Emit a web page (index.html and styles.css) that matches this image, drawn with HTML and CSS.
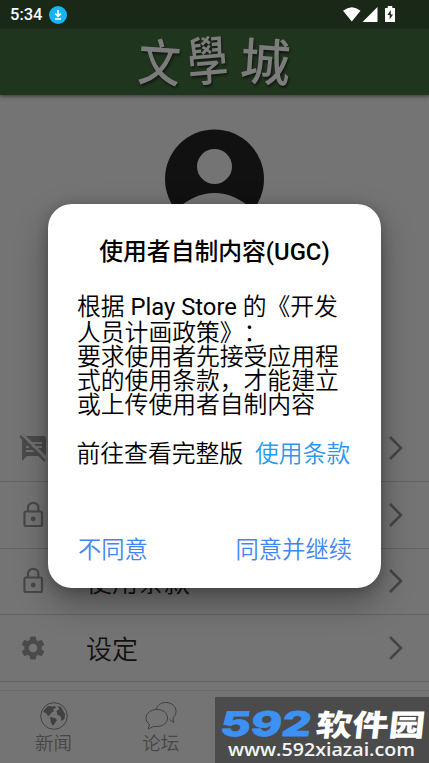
FILE: index.html
```html
<!DOCTYPE html>
<html lang="zh-CN">
<head>
<meta charset="utf-8">
<title>文學城</title>
<link rel="stylesheet" href="styles.css">
</head>
<body>
<div class="screen">
  <header class="status">
    <span class="clock">5:34</span>
    <svg class="download" viewBox="0 0 18 18"><circle cx="9" cy="9" r="9" fill="#16b4f8"/><path d="M9 4v6M6.2 7.6L9 10.4l2.8-2.8M6 13h6" fill="none" stroke="#fff" stroke-width="1.7"/></svg>
    <svg class="signals" viewBox="0 0 54 18"><path d="M0 4.7Q9-2.3 17.5 4.7L8.8 15.5zM19.5 16L34.5 1v15z" fill="#fff"/><path d="M42 2h2.7V0h4.6v2H52v14H42z" fill="#fff"/><path d="M47.8 4l-3.4 5h2.3v4.6l3.3-5.2h-2.2z" fill="#192817"/></svg>
  </header>
  <div class="brand">
    <svg class="wordmark" viewBox="0 0 160 64"><g class="ink"><text transform="translate(2 51) rotate(4) scale(.96 1.15)" font-size="44">文</text><text transform="translate(54 53) rotate(-5) scale(.92 1.2)" font-size="44">學</text><text transform="translate(104 50) rotate(4) scale(1.14 1.15)" font-size="44">城</text></g></svg>
  </div>
  <main class="profile">
    <svg class="avatar" viewBox="0 0 100 100"><defs><mask id="person"><rect width="100" height="100" fill="#fff"/><circle cx="49.5" cy="37.5" r="17.5" fill="#000"/><path d="M12 80Q30 64 49.500 64T87 80Q70 92 49.500 92T12 80" fill="#000"/></mask></defs><circle cx="49.500" cy="50" r="49.500" fill="#111" mask="url(#person)"/></svg>
  </main>
  <ul class="menu">
    <li><svg class="icon" viewBox="0 0 26 26"><path d="M4 1h20q2 0 2 2v16q0 2-2 2H7l-5 5V3z" fill="#4a4a4a"/><path d="M6 8h3m2 0h11M6 12h3m2 0h11M6 16h10" stroke="#707070" stroke-width="2"/><path d="M2-1L28 25" stroke="#707070" stroke-width="3"/><path d="M0 1L25 26" stroke="#4a4a4a" stroke-width="2.300"/></svg><span></span><svg class="chevron" viewBox="0 0 14 24"><path d="M1 1l11 11L1 23"/></svg></li>
    <li><svg class="icon" viewBox="0 0 26 26"><g fill="none" stroke="#484848" stroke-width="2.200"><rect x="4.500" y="9.500" width="17.500" height="14.500" rx="1.500"/><path d="M8 9V6a5.200 5.200 0 0110.400 0v3"/></g><circle cx="13.200" cy="17" r="2.400" fill="#484848"/></svg><span></span><svg class="chevron" viewBox="0 0 14 24"><path d="M1 1l11 11L1 23"/></svg></li>
    <li><svg class="icon" viewBox="0 0 26 26"><g fill="none" stroke="#484848" stroke-width="2.200"><rect x="4.500" y="9.500" width="17.500" height="14.500" rx="1.500"/><path d="M8 9V6a5.200 5.200 0 0110.400 0v3"/></g><circle cx="13.200" cy="17" r="2.400" fill="#484848"/></svg><span>使用条款</span><svg class="chevron" viewBox="0 0 14 24"><path d="M1 1l11 11L1 23"/></svg></li>
    <li><svg class="icon gear" viewBox="2 2 20 20"><path fill="#4a4a4a" d="M19.140 12.940c.04-.3.06-.61.06-.94 0-.32-.02-.64-.07-.94l2.030-1.580c.18-.14.23-.41.12-.61l-1.920-3.320c-.12-.22-.37-.29-.59-.22l-2.390.96c-.5-.38-1.030-.7-1.620-.94l-.36-2.540c-.04-.24-.24-.41-.48-.41h-3.840c-.24 0-.43.17-.47.41l-.36 2.540c-.59.24-1.130.57-1.620.94l-2.390-.96c-.22-.08-.47 0-.59.22L2.740 8.870c-.12.21-.08.47.12.61l2.030 1.580c-.05.3-.09.63-.09.94s.02.64.07.94l-2.030 1.580c-.18.14-.23.41-.12.61l1.920 3.320c.12.22.37.29.59.22l2.390-.96c.5.38 1.030.7 1.620.94l.36 2.540c.05.24.24.41.48.41h3.840c.24 0 .44-.17.47-.41l.36-2.540c.59-.24 1.130-.56 1.620-.94l2.390.96c.22.08.47 0 .59-.22l1.920-3.320c.12-.22.07-.47-.12-.61l-2.010-1.580zM12 15.600a3.600 3.600 0 110-7.200 3.600 3.600 0 010 7.200z"/></svg><span>设定</span><svg class="chevron" viewBox="0 0 14 24"><path d="M1 1l11 11L1 23"/></svg></li>
  </ul>
  <nav class="tabs">
    <div class="tab"><svg viewBox="0 0 32 30"><circle cx="16" cy="15" r="13.300" fill="none" stroke="#414141"/><path fill="#414141" d="M6 9l4-4 5 .5 2-.5 1 2-3 1 1 2-3 2-2 3-2-1-1-2-3-1zM12 16l5 1 2 2-2 3-2 3-2-3zM19 5l4 1 4 7-.5 5-3 2-1-5-3-1-1-4 3-2z"/></svg><span>新闻</span></div>
    <div class="tab"><svg viewBox="0 0 32 30"><g fill="none" stroke="#414141"><path d="M11 8C13 3 17 1.500 21 1.500c6 0 10 4 10 9 0 3-1.500 5-3 6.500l.5 4.500-4-3"/><path d="M4.500 23.500C2 21.500 1 19.500 1 17c0-5 5-8.500 11-8.500s10.500 3.500 10.500 8.500-4.500 8.500-10.500 8.500H8.500L3 28z"/></g></svg><span>论坛</span></div>
    <div class="tab"></div><div class="tab"></div>
  </nav>
</div>
<section class="dialog">
  <h1>使用者自制内容(UGC)</h1>
  <p class="body"><span>根据 <b>Play Store</b> 的《开发</span><span>人员计画政策》：</span><span>要求使用者先接受应用程</span><span>式的使用条款，才能建立</span><span>或上传使用者自制内容</span></p>
  <p class="terms"><span>前往查看完整版</span><a>使用条款</a></p>
  <div class="actions"><span>不同意</span><span>同意并继续</span></div>
</section>
<aside class="watermark">
  <svg viewBox="0 0 214 66"><text transform="translate(4 39) skewX(-8)" class="num" textLength="91" lengthAdjust="spacingAndGlyphs">592</text><text transform="translate(100 39) skewX(-6)" class="park" textLength="109" lengthAdjust="spacingAndGlyphs">软件园</text><text x="13" y="59" class="site" textLength="187" lengthAdjust="spacingAndGlyphs">www.592xiazai.com</text></svg>
</aside>
</body>
</html>
```
FILE: styles.css
```css
* { box-sizing: border-box; }
body { margin: 0; width: 429px; height: 763px; overflow: hidden; position: relative; font-family: Roboto, "Noto Sans CJK SC", sans-serif; background: #747474; text-spacing-trim: space-all; }
h1, p, ul { margin: 0; padding: 0; }
.screen { height: 763px; display: flex; flex-direction: column; }
.status { height: 29px; flex: none; background: #192817; display: flex; align-items: center; padding: 0 32px 0 10px; color: #fff; }
.clock { font-size: 16.5px; font-weight: 500; line-height: 20px; padding-top: 1px; width: 39px; }
.download { width: 18px; height: 18px; }
.signals { width: 54px; height: 18px; margin-left: auto; margin-top: 1px; }
.brand { height: 66px; flex: none; background: #20351d; display: flex; justify-content: center; box-shadow: 0 1px 4px #333; }
.wordmark { width: 160px; height: 64px; overflow: visible; }
.ink { font-family: "Noto Sans CJK TC", sans-serif; font-weight: 500; fill: #7c7c7c; filter: drop-shadow(1px 2px 1px #10180f); }
.profile { height: 320px; flex: none; display: flex; justify-content: center; padding-top: 34px; }
.avatar { width: 100px; height: 100px; }
.menu { list-style: none; flex: none; }
.menu li { height: 66.800px; display: flex; align-items: center; border-bottom: 1px solid #626262; padding: 0 26px 0 20px; }
.icon { width: 26px; height: 26px; flex: none; overflow: visible; }
.gear { width: 24px; height: 24px; margin: 0 1px; }
.menu span { flex: 1; margin-left: 40px; padding-bottom: 2px; font-size: 26px; font-weight: 350; color: #111; }
.chevron { width: 14px; height: 24px; }
.chevron path { fill: none; stroke: #454545; stroke-width: 2.600; }
.tabs { margin-top: auto; height: 73px; flex: none; border-top: 1px solid #6b6b6b; display: flex; }
.tab { flex: 1; display: flex; flex-direction: column; align-items: center; padding-top: 10px; color: #464646; font-size: 18.500px; line-height: 23px; }
.tab svg { width: 32px; height: 30px; }
.tab span { margin-top: 2px; font-weight: 350; }
.dialog { position: absolute; left: 48px; top: 204px; width: 333px; height: 384px; border-radius: 24px; background: #fff; box-shadow: 0 14px 32px rgba(0,0,0,.34), 0 2px 12px rgba(0,0,0,.2); color: #000; padding: 32px 29px 0; font-weight: 350; }
.dialog h1 { font-size: 23.800px; line-height: 32px; font-weight: 500; text-align: center; white-space: nowrap; }
.body { margin-top: 27px; font-size: 23.800px; line-height: 24px; }
.body span { display: block; white-space: nowrap; }
.body span:first-child { line-height: 25px; margin-bottom: 1px; }
.body b { font-weight: 400; }
.terms { display: flex; gap: 12px; margin-top: 21px; margin-left: -.5px; font-size: 23.800px; line-height: 32px; white-space: nowrap; }
.terms a { color: #2b98ee; }
.actions { display: flex; justify-content: space-between; margin: 64px 0 0 1px; font-size: 23.300px; line-height: 32px; color: #4285f4; }
.watermark { position: absolute; left: 215px; top: 697px; width: 214px; height: 66px; background: #4b4b4b; }
.watermark svg { display: block; width: 214px; height: 66px; }
.num { font: 800 34px Inter, sans-serif; fill: #3d91f5; stroke: #3d91f5; stroke-width: .8; }
.park { font: 900 30px "Noto Sans CJK SC", sans-serif; fill: #fff; }
.site { font: 600 18.500px "Open Sans", sans-serif; fill: #f4f4f4; }
```
